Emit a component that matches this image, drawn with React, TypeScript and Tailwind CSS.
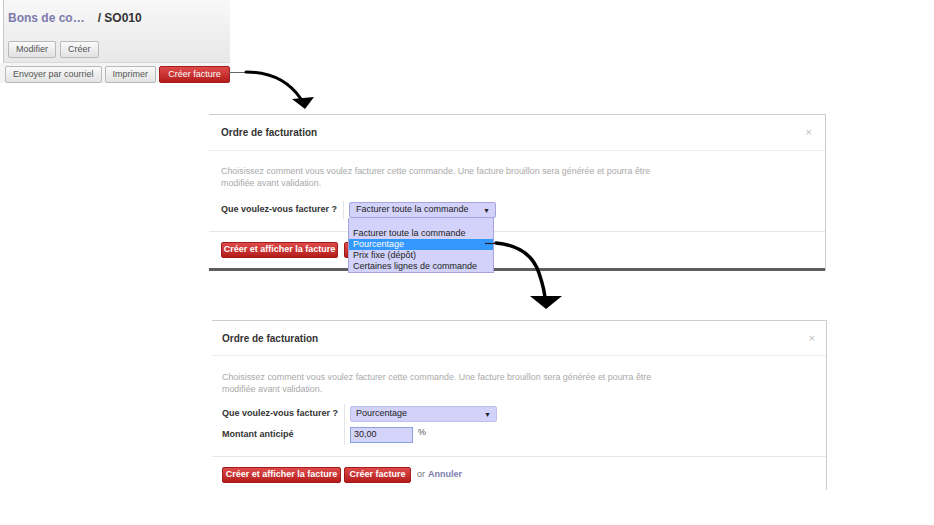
import React from "react";

const font = "font-['Liberation_Sans',Arial,sans-serif]";

function GrayBtn({ children, className = "" }: { children: React.ReactNode; className?: string }) {
  return (
    <div
      className={`h-[17px] px-[7px] flex items-center rounded-[2px] border border-[#b9b9b9] bg-linear-to-b from-[#fafafa] to-[#e2e2e2] text-[9px] text-[#555] whitespace-nowrap ${className}`}
    >
      {children}
    </div>
  );
}

function RedBtn({ children, className = "" }: { children: React.ReactNode; className?: string }) {
  return (
    <div
      className={`h-[16px] flex items-center justify-center rounded-[2px] border border-[#a31c1c] bg-linear-to-b from-[#de4a4a] to-[#b41b1b] text-[9px] font-bold text-white whitespace-nowrap ${className}`}
    >
      {children}
    </div>
  );
}

function Intro() {
  return (
    <p className="text-[8.9px] leading-[12px] text-[#a9a9a9]">
      Choisissez comment vous voulez facturer cette commande. Une facture brouillon sera générée et pourra être
      <br />
      modifiée avant validation.
    </p>
  );
}

function Caret() {
  return <span className="text-[7px] text-[#222] leading-none">▼</span>;
}

export default function App() {
  return (
    <div className={`relative w-[934px] h-[525px] bg-white overflow-hidden ${font}`}>
      {/* Panel 1 : toolbar */}
      <div className="absolute left-0 top-0 w-[230px]">
        <div className="ml-[3px] h-[63px] border-l border-[#c8c8c8] border-b border-b-[#d9d9d9] bg-linear-to-b from-[#f8f8f8] to-[#e8e8e8] pl-[4px] pt-[10px]">
          <div className="h-[16px] flex items-center text-[12px] font-bold leading-none">
            <span className="text-[#7c7bad]">Bons de co…</span>
            <span className="ml-[13px] text-[#333]">/ SO010</span>
          </div>
          <div className="mt-[15px] flex gap-[4px]">
            <GrayBtn>Modifier</GrayBtn>
            <GrayBtn>Créer</GrayBtn>
          </div>
        </div>
        <div className="h-[20px] pl-[5px] pt-[3px] flex gap-[3px] bg-[#f4f4f4]">
          <GrayBtn>Envoyer par courriel</GrayBtn>
          <GrayBtn>Imprimer</GrayBtn>
          <RedBtn className="h-[17px] w-[71px] font-normal">Créer facture</RedBtn>
        </div>
      </div>

      {/* Panel 2 : modal with open dropdown */}
      <div className="absolute left-[209px] top-[114px] w-[617px] bg-white border-t border-r border-[#cdcdcd]">
        <div className="h-[36px] flex items-center justify-between pl-[12px] pr-[13px] border-b border-[#ececec]">
          <span className="text-[10px] font-bold text-[#333]">Ordre de facturation</span>
          <span className="text-[11px] text-[#bdbdbd]">×</span>
        </div>
        <div className="pt-[14px] pb-[12px] pl-[12px]">
          <Intro />
          <div className="mt-[12px] flex">
            <div className="w-[122px] h-[18px] flex items-center text-[9px] font-bold text-[#333]">
              Que voulez-vous facturer ?
            </div>
            <div className="border-l border-[#e4e4e4] pl-[5px] py-[1px]">
              <div className="w-[147px] h-[16px] flex items-center justify-between pl-[6px] pr-[5px] rounded-[2px] border border-[#a5a5dc] bg-[#d2d2fa] text-[9px] text-[#222]">
                <span>Facturer toute la commande</span>
                <Caret />
              </div>
            </div>
          </div>
        </div>
        <div className="h-[37px] border-t border-[#e6e6e6] pl-[12px] pt-[10px] flex gap-[6px]">
          <RedBtn className="w-[117px]">Créer et afficher la facture</RedBtn>
          <RedBtn className="w-[68px]">Créer facture</RedBtn>
        </div>
        <div className="h-[3px] bg-[#5e5e5e]" />

        {/* open dropdown list */}
        <div className="absolute left-[139px] top-[103px] w-[146px] h-[55px] bg-[#d2d2fa] border border-t-0 border-[#a5a5dc] pt-[10px] text-[9px] leading-[11px] text-[#222]">
          <div className="pl-[4px]">Facturer toute la commande</div>
          <div className="pl-[4px] bg-[#3399ff] text-white">Pourcentage</div>
          <div className="pl-[4px]">Prix fixe (dépôt)</div>
          <div className="pl-[4px]">Certaines lignes de commande</div>
        </div>
      </div>

      {/* Panel 3 : modal with percentage */}
      <div className="absolute left-[212px] top-[320px] w-[615px] bg-white border-t border-r border-[#cdcdcd]">
        <div className="h-[35px] flex items-center justify-between pl-[10px] pr-[11px] border-b border-[#ececec]">
          <span className="text-[10px] font-bold text-[#333]">Ordre de facturation</span>
          <span className="text-[11px] text-[#bdbdbd]">×</span>
        </div>
        <div className="pt-[15px] pb-[11px] pl-[10px]">
          <Intro />
          <div className="mt-[9px] flex">
            <div className="w-[122px] flex flex-col gap-[5px] py-[2px] text-[9px] font-bold text-[#333]">
              <div className="h-[16px] flex items-center">Que voulez-vous facturer ?</div>
              <div className="h-[16px] flex items-center">Montant anticipé</div>
            </div>
            <div className="border-l border-[#e4e4e4] pl-[5px] py-[2px] flex flex-col gap-[5px]">
              <div className="w-[147px] h-[16px] flex items-center justify-between pl-[5px] pr-[5px] rounded-[2px] border border-[#c0c0ee] bg-[#d2d2fa] text-[9px] text-[#222]">
                <span>Pourcentage</span>
                <Caret />
              </div>
              <div className="h-[16px] flex items-start gap-[5px]">
                <div className="w-[63px] h-[16px] flex items-center pl-[3px] border border-[#8aa2dd] bg-[#d4d4fb] text-[9px] text-[#222]">
                  30,00
                </div>
                <span className="text-[9px] text-[#555] leading-[10px]">%</span>
              </div>
            </div>
          </div>
        </div>
        <div className="h-[34px] border-t border-[#e6e6e6] pl-[10px] pt-[10px] flex items-start gap-[3px]">
          <RedBtn className="w-[119px]">Créer et afficher la facture</RedBtn>
          <RedBtn className="w-[67px]">Créer facture</RedBtn>
          <div className="h-[16px] flex items-center ml-[3px] text-[9px] text-[#777]">
            or<span className="ml-[3px] font-bold text-[#7c7bad]">Annuler</span>
          </div>
        </div>
      </div>

      {/* Arrows */}
      <svg className="absolute left-0 top-0 pointer-events-none" width="934" height="525" viewBox="0 0 934 525">
        <path d="M229 72.5 L248 72.5" stroke="#666" strokeWidth="1" fill="none" />
        <path d="M246 72 C 268 72, 288 80, 301 99" stroke="#000" strokeWidth="3" fill="none" strokeLinecap="round" />
        <polygon points="292,99 314,97 305,109" fill="#000" />
        <path d="M485 243.5 L498 243.5" stroke="#222" strokeWidth="1.2" fill="none" />
        <path d="M496 243 C 518 245, 533 255, 539 273 C 543 285, 545 292, 545 300" stroke="#000" strokeWidth="3.5" fill="none" strokeLinecap="round" />
        <polygon points="530,296 562,296 546,309" fill="#000" />
      </svg>
    </div>
  );
}
